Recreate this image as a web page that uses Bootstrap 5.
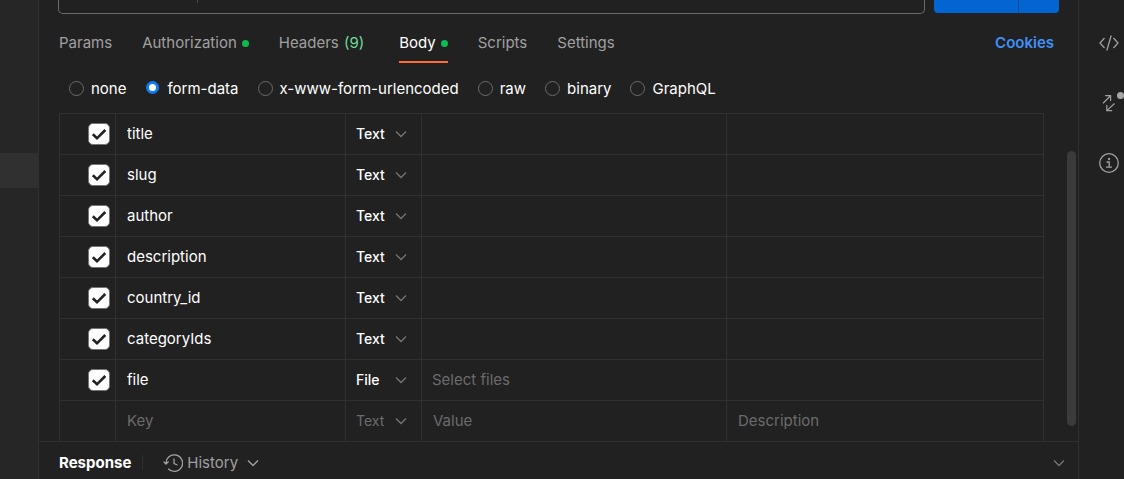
<!DOCTYPE html>
<html lang="en" data-bs-theme="dark">
<head>
<meta charset="utf-8">
<meta name="viewport" content="width=device-width, initial-scale=1">
<title>Request body</title>
<link href="https://cdn.jsdelivr.net/npm/bootstrap@5.3.0/dist/css/bootstrap.min.css" rel="stylesheet">
<style>
  :root { --line: #303030; --muted: #a0a0a0; --dim: #6b6b6b; }
  body { background: #212121; color: #fff; font: 400 15px/20px Inter, "Liberation Sans", sans-serif; }
  .side { width: 39px; background: #262626; border-right: 1px solid var(--line); padding-top: 153px; }
  .side-item { display: block; height: 35px; background: #303030; }
  .rail { width: 46px; border-left: 1px solid var(--line); padding: 33px 0 0 20px; gap: 40px; }
  .rail button, .plain { background: none; border: 0; padding: 0; color: var(--muted); }
  .rail button { width: 20px; height: 20px; position: relative; }
  .rail svg, .hist svg { display: block; fill: none; stroke: currentColor; }
  .ping { position: absolute; width: 7px; height: 7px; border-radius: 50%; background: #a6a6a6; left: 18px; top: -1px; }
  .urlrow { padding: 0 19px; gap: 9px; height: 14px; }
  .urlbox { border: 1px solid #6b6b6b; border-top: 0; border-radius: 0 0 5px 5px; }
  .urlbox input { background: none; border: 0; min-width: 0; outline: 0; height: 10px; }
  .method { width: 139px; height: 3px; border-right: 1px solid #484848; }
  .sendgrp { width: 125px; height: 13px; }
  .sendgrp button { background: #0265d2; border: 0; border-radius: 0 0 0 4px; }
  .sendgrp button + button { width: 41px; border-left: 1px solid #0a4d9c; border-radius: 0 0 4px 0; }
  .tabs { padding: 19px 24px 0 20px; gap: 30px; }
  .tabs a { color: var(--muted); text-decoration: none; padding-bottom: 8px; border-bottom: 2px solid transparent; }
  .tabs a.active { color: #fff; border-color: #ff6c37; }
  .tabs a.cookies { color: #4090f7; font-weight: 600; }
  .num { color: #6bdd9a; margin: 0 5px 0 1px; }
  .dot { display: inline-block; width: 7px; height: 7px; border-radius: 50%; background: #0cbb52; margin-left: 5px; vertical-align: 1px; }
  .modes { padding: 16px 30px 14px; gap: 19px; }
  .modes label { gap: 7px; }
  .modes input { appearance: none; width: 15px; height: 15px; margin: 0 0 2px; border: 1px solid #6b6b6b; border-radius: 50%; }
  .modes input:checked { width: 13px; height: 13px; margin: 0 1px 3px; border: 3px solid #0a7cf5; background: #fff; }
  .gridwrap { padding: 0 34px 0 20px; position: relative; }
  .params { table-layout: fixed; border-collapse: collapse; width: 100%; }
  .params td { border: 1px solid var(--line); height: 41px; padding: 0; vertical-align: middle; }
  .params tr:last-child td { border-bottom: 0; height: 40px; }
  .params input[type=text] { width: 100%; display: block; background: none; border: 0; outline: 0; color: #fff; padding: 0 11px; height: 20px; }
  .params input::placeholder { color: var(--dim); opacity: 1; }
  .params input[type=checkbox] { appearance: none; display: block; width: 22px; height: 22px; margin: 0 5px 0 auto; border: 1px solid #757575; border-radius: 5px;
    background: #fff url("data:image/svg+xml,%3Csvg xmlns='http://www.w3.org/2000/svg' viewBox='0 0 20 20'%3E%3Cpath d='M3.8 10.300l4.200 4 8.300-8.300' fill='none' stroke='%23212121' stroke-width='2.6'/%3E%3C/svg%3E") center/20px 20px no-repeat; }
  .params select { appearance: none; display: block; width: 100%; border: 0; padding: 0 10px; height: 20px; color: #fff; font-size: 14px; font-weight: 500;
    background: url("data:image/svg+xml,%3Csvg xmlns='http://www.w3.org/2000/svg' viewBox='0 0 12 8'%3E%3Cpath d='M1 1.5l5 5 5-5' fill='none' stroke='%23757575' stroke-width='1.3'/%3E%3C/svg%3E") right 14px center/12px 8px no-repeat; }
  .params .blank select { color: var(--dim); font-weight: 400; }
  .filepick { color: var(--dim); padding-left: 10px; }
  .thumb { position: absolute; right: 2px; top: 38px; bottom: 15px; width: 9px; border-radius: 5px; background: #3b3b3b; }
  .resp { border-top: 1px solid var(--line); padding: 5px 13px 0 20px; height: 38px; }
  .sep { width: 1px; height: 15px; background: var(--line); margin: 0 20px 0 11px; }
  .hist { gap: 4px; }
  .chev { display: block; fill: none; stroke: currentColor; }
  .collapser { color: #757575; }
</style>
</head>
<body>
<div class="d-flex min-vh-100">
  <aside class="side flex-shrink-0"><a href="#" class="side-item" aria-label="Selected item"></a></aside>

  <main class="flex-grow-1 d-flex flex-column overflow-hidden">
    <div class="urlrow d-flex align-items-start">
      <div class="urlbox flex-grow-1 d-flex align-self-stretch">
        <span class="method"></span><input type="text" class="flex-grow-1" aria-label="Request URL">
      </div>
      <div class="sendgrp d-flex">
        <button type="button" class="flex-grow-1" aria-label="Send"></button><button type="button" aria-label="Send options"></button>
      </div>
    </div>

    <nav class="tabs d-flex">
      <a href="#">Params</a>
      <a href="#">Authorization<span class="dot"></span></a>
      <a href="#">Headers <span class="num">(9)</span></a>
      <a href="#" class="active">Body<span class="dot"></span></a>
      <a href="#">Scripts</a>
      <a href="#">Settings</a>
      <a href="#" class="cookies ms-auto">Cookies</a>
    </nav>

    <div class="modes d-flex">
      <label class="d-flex align-items-center"><input type="radio" name="mode">none</label>
      <label class="d-flex align-items-center"><input type="radio" name="mode" checked>form-data</label>
      <label class="d-flex align-items-center"><input type="radio" name="mode">x-www-form-urlencoded</label>
      <label class="d-flex align-items-center"><input type="radio" name="mode">raw</label>
      <label class="d-flex align-items-center"><input type="radio" name="mode">binary</label>
      <label class="d-flex align-items-center"><input type="radio" name="mode">GraphQL</label>
    </div>

    <div class="gridwrap">
      <table class="params">
        <colgroup><col style="width:56px"><col style="width:230px"><col style="width:76px"><col style="width:31%"><col></colgroup>
        <tbody id="rows"></tbody>
      </table>
      <div class="thumb"></div>
    </div>

    <footer class="resp d-flex align-items-center">
      <strong class="fw-bold">Response</strong>
      <span class="sep"></span>
      <button type="button" class="plain hist d-flex align-items-center">
        <svg width="20" height="20" viewBox="0 0 20 20" stroke-width="1.3"><path d="M3 11A8.3 8.3 0 1 1 5.2 15.8M.6 8.6L3 11l2.6-2.4M11 5.5v5l3.5 1.5"/></svg>
        History
        <svg class="chev ms-1" width="14" height="10" viewBox="0 0 14 10" stroke-width="1.4"><path d="M2 2.5l5 5 5-5"/></svg>
      </button>
      <button type="button" class="plain collapser ms-auto" aria-label="Collapse response">
        <svg class="chev" width="12" height="8" viewBox="0 0 12 8" stroke-width="1.3"><path d="M1 1.5l5 5 5-5"/></svg>
      </button>
    </footer>
  </main>

  <aside class="rail flex-shrink-0 d-flex flex-column">
    <button type="button" aria-label="Code"><svg width="20" height="20" viewBox="0 0 20 20" stroke-width="1.3"><path d="M5.5 5L1 10l4.5 5M14.500 5L19 10l-4.500 5M12.200 2.500L7.800 17.500"/></svg></button>
    <button type="button" aria-label="Related requests"><svg width="20" height="20" viewBox="0 0 20 20" stroke-width="1.2"><path d="M4 10.200L11.300 3M6.200 2.700h5.400v5.300M15.500 10.500l-7.400 6.900M7.800 12v5.600h5.400"/></svg><span class="ping"></span></button>
    <button type="button" aria-label="Info"><svg width="20" height="20" viewBox="0 0 20 20" stroke-width="1.3"><circle cx="10" cy="10" r="9.300"/><path d="M7.500 9h2.700v5M7 14.200h6"/><circle cx="10" cy="6" r=".5"/></svg></button>
  </aside>
</div>
<script>
  const keys = ["title", "slug", "author", "description", "country_id", "categoryIds", "file"];
  const select = (type) => `<select aria-label="Type"><option>${type}</option><option>${type === "Text" ? "File" : "Text"}</option></select>`;
  const field = (label, value, hint) => `<input type="text" aria-label="${label}" value="${value}" placeholder="${hint}">`;
  document.getElementById("rows").innerHTML = keys.map((k) => `<tr>
    <td><input type="checkbox" aria-label="Include ${k}" checked></td>
    <td>${field("Key", k, "")}</td>
    <td>${select(k === "file" ? "File" : "Text")}</td>
    <td>${k === "file" ? '<button type="button" class="plain filepick">Select files</button>' : field("Value", "", "")}</td>
    <td>${field("Description", "", "")}</td></tr>`).join("") +
    `<tr class="blank"><td></td><td>${field("Key", "", "Key")}</td><td>${select("Text")}</td>
    <td>${field("Value", "", "Value")}</td><td>${field("Description", "", "Description")}</td></tr>`;
</script>
<script src="https://cdn.jsdelivr.net/npm/bootstrap@5.3.0/dist/js/bootstrap.bundle.min.js"></script>
</body>
</html>
